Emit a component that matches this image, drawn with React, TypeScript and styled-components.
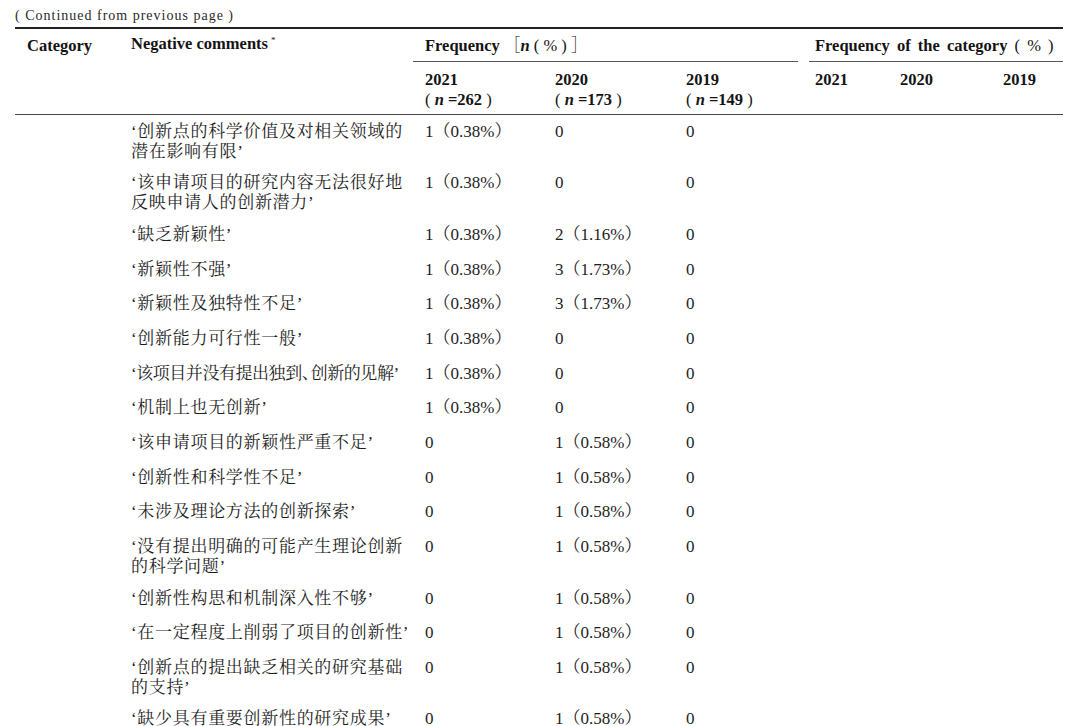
import React from "react";
import styled, { createGlobalStyle } from "styled-components";

const FONT = `"Liberation Serif", "Noto Serif CJK SC", "Noto Sans CJK SC", serif`;
const COLS = "116px 282px 130px 131px 124px 11px 85px 103px 66px";

const Global = createGlobalStyle`
  html, body { margin: 0; padding: 0; background: #ffffff; }
  body { font-family: ${FONT}; color: #1c1c1c; }
`;

const Page = styled.div`
  width: 1080px;
  height: 726px;
  overflow: hidden;
  padding: 7px 17px 0 15px;
  box-sizing: border-box;
`;

const Caption = styled.div`
  font-size: 14px;
  line-height: 18px;
  letter-spacing: 1px;
  color: #2a2a2a;
  margin-bottom: 1.5px;
`;

const Table = styled.div`
  width: 1048px;
  border-top: 2px solid #222;
`;

const Header = styled.div`
  display: grid;
  grid-template-columns: ${COLS};
  border-bottom: 1.5px solid #4a4a4a;
  font-weight: 700;
  font-size: 16.5px;
  color: #141414;
`;

const HeadCell = styled.div<{ $col: string; $row: string; $pad?: number; $top?: number }>`
  grid-column: ${(p) => p.$col};
  grid-row: ${(p) => p.$row};
  padding: ${(p) => p.$top ?? 7.5}px 0 0 ${(p) => p.$pad ?? 0}px;
  line-height: 20px;
  white-space: nowrap;
`;

const GroupTitle = styled.div<{ $col: string; $pad: number; $spaced?: boolean }>`
  grid-column: ${(p) => p.$col};
  grid-row: 1;
  padding: 7.5px 0 5px ${(p) => p.$pad}px;
  line-height: 20px;
  word-spacing: ${(p) => (p.$spaced ? "3px" : "0")};
  border-bottom: 1px solid #555;
  white-space: nowrap;
`;

const YearCell = styled.div<{ $col: number; $pad?: number }>`
  grid-column: ${(p) => p.$col};
  grid-row: 2;
  padding: 7.5px 0 4px ${(p) => p.$pad ?? 0}px;
  line-height: 20px;
  white-space: nowrap;
`;

const Light = styled.span`
  font-weight: 400;
`;

const Ital = styled.i`
  font-style: italic;
`;

const Sup = styled.span`
  position: relative;
  top: -6px;
  font-size: 9px;
  font-weight: 400;
  margin-left: 3px;
`;

const Row = styled.div<{ $multi?: boolean }>`
  display: grid;
  grid-template-columns: ${COLS};
  padding: 7.4px 0 ${(p) => (p.$multi ? 4.1 : 7.3)}px;
  font-size: 17px;
  line-height: 20px;
  color: #1e1e1e;
`;

const Comment = styled.div<{ $tight?: boolean }>`
  grid-column: 2;
  min-width: 0;
  letter-spacing: ${(p) => (p.$tight ? "-0.45px" : "0.7px")};
  white-space: nowrap;
`;

const Line = styled.span`
  display: block;
`;

const HalfPunct = styled.span`
  letter-spacing: -8px;
`;

const Value = styled.div<{ $col: number }>`
  grid-column: ${(p) => p.$col};
  padding-left: 12px;
  white-space: nowrap;
`;

type Item = { lines: React.ReactNode[]; v: [string, string, string]; tight?: boolean };

const A = "1（0.38%）";
const B = "1（0.58%）";

const rows: Item[] = [
  { lines: ["‘创新点的科学价值及对相关领域的", "潜在影响有限’"], v: [A, "0", "0"] },
  { lines: ["‘该申请项目的研究内容无法很好地", "反映申请人的创新潜力’"], v: [A, "0", "0"] },
  { lines: ["‘缺乏新颖性’"], v: [A, "2（1.16%）", "0"] },
  { lines: ["‘新颖性不强’"], v: [A, "3（1.73%）", "0"] },
  { lines: ["‘新颖性及独特性不足’"], v: [A, "3（1.73%）", "0"] },
  { lines: ["‘创新能力可行性一般’"], v: [A, "0", "0"] },
  {
    lines: [
      <>
        ‘该项目并没有提出独到<HalfPunct>、</HalfPunct>创新的见解’
      </>,
    ],
    v: [A, "0", "0"],
    tight: true,
  },
  { lines: ["‘机制上也无创新’"], v: [A, "0", "0"] },
  { lines: ["‘该申请项目的新颖性严重不足’"], v: ["0", B, "0"] },
  { lines: ["‘创新性和科学性不足’"], v: ["0", B, "0"] },
  { lines: ["‘未涉及理论方法的创新探索’"], v: ["0", B, "0"] },
  { lines: ["‘没有提出明确的可能产生理论创新", "的科学问题’"], v: ["0", B, "0"] },
  { lines: ["‘创新性构思和机制深入性不够’"], v: ["0", B, "0"] },
  { lines: ["‘在一定程度上削弱了项目的创新性’"], v: ["0", B, "0"] },
  { lines: ["‘创新点的提出缺乏相关的研究基础", "的支持’"], v: ["0", B, "0"] },
  { lines: ["‘缺少具有重要创新性的研究成果’"], v: ["0", B, "0"] },
];

const Sample = ({ n }: { n: string }) => (
  <>
    <Light>( </Light>
    <Ital>n</Ital> ={n}
    <Light> )</Light>
  </>
);

export default function App() {
  return (
    <>
      <Global />
      <Page>
        <Caption>( Continued from previous page )</Caption>
        <Table>
          <Header>
            <HeadCell $col="1" $row="1 / 3" $pad={12}>
              Category
            </HeadCell>
            <HeadCell $col="2" $row="1 / 3" $top={5.5}>
              Negative comments<Sup>*</Sup>
            </HeadCell>
            <GroupTitle $col="3 / 6" $pad={12}>
              Frequency <Light>［</Light>
              <Ital>n</Ital>
              <Light> ( % ) ］</Light>
            </GroupTitle>
            <GroupTitle $col="7 / 10" $pad={6} $spaced>
              Frequency of the category <Light>( % )</Light>
            </GroupTitle>
            <YearCell $col={3} $pad={12}>
              2021
              <br />
              <Sample n="262" />
            </YearCell>
            <YearCell $col={4} $pad={12}>
              2020
              <br />
              <Sample n="173" />
            </YearCell>
            <YearCell $col={5} $pad={12}>
              2019
              <br />
              <Sample n="149" />
            </YearCell>
            <YearCell $col={7} $pad={6}>
              2021
            </YearCell>
            <YearCell $col={8} $pad={6}>
              2020
            </YearCell>
            <YearCell $col={9} $pad={6}>
              2019
            </YearCell>
          </Header>
          {rows.map((r, i) => (
            <Row key={i} $multi={r.lines.length > 1}>
              <Comment $tight={r.tight}>
                {r.lines.map((l, j) => (
                  <Line key={j}>{l}</Line>
                ))}
              </Comment>
              <Value $col={3}>{r.v[0]}</Value>
              <Value $col={4}>{r.v[1]}</Value>
              <Value $col={5}>{r.v[2]}</Value>
            </Row>
          ))}
        </Table>
      </Page>
    </>
  );
}
